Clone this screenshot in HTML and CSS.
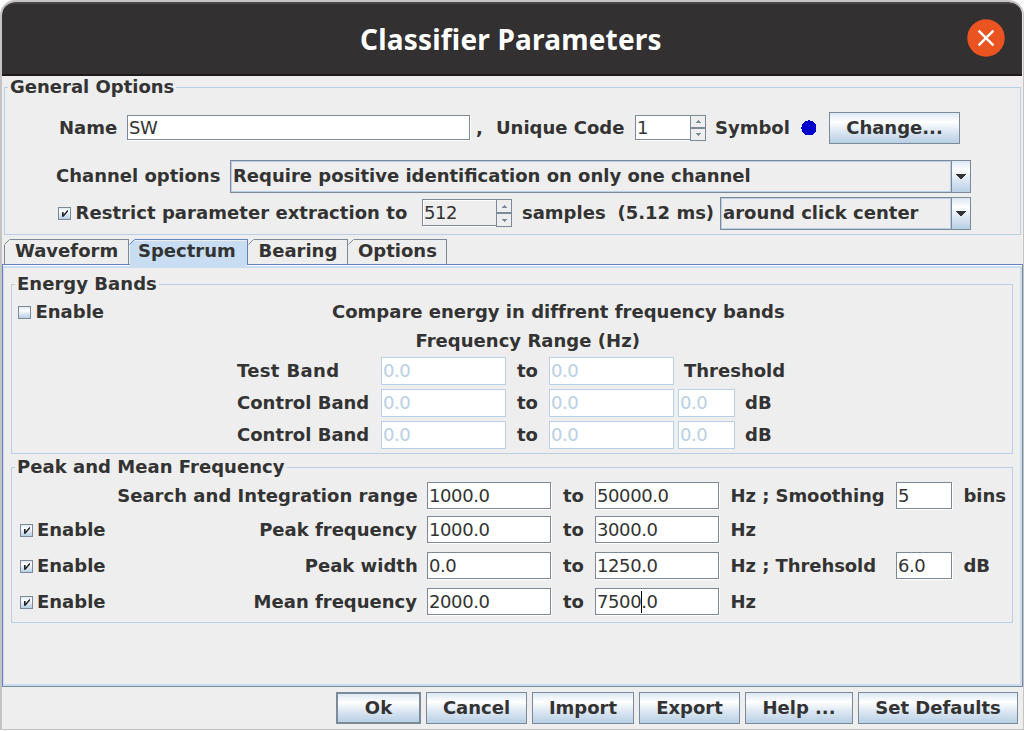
FILE: index.html
```html
<!DOCTYPE html>
<html lang="en">
<head>
<meta charset="utf-8">
<title>Classifier Parameters</title>
<link rel="stylesheet" href="styles.css">
</head>
<body>
<svg width="0" height="0" class="defs">
  <symbol id="check" viewBox="0 0 11 11"><path d="M3 4h1.6v2.4L8.2 2.2h.9v1.3L4.6 8.8H3z" fill="#222"/></symbol>
  <symbol id="arrow" viewBox="0 0 10 5" shape-rendering="crispEdges"><path d="M0 0h10v1H9v1H8v1H7v1H6v1H4V4H3V3H2V2H1V1H0z" fill="#333"/></symbol>
  <symbol id="up" viewBox="0 0 5 3" shape-rendering="crispEdges"><path d="M2 0h1v1h1v1h1v1H0V2h1V1h1z" fill="#7a8a99"/></symbol>
  <symbol id="down" viewBox="0 0 5 3" shape-rendering="crispEdges"><path d="M0 0h5v1H4v1H3v1H2V2H1V1H0z" fill="#7a8a99"/></symbol>
</svg>
<div class="window">
  <header class="titlebar">
    <h1 class="title"><span>Classifier Parameters</span></h1>
    <svg class="close" width="38" height="38" viewBox="0 0 38 38"><circle cx="19" cy="19" r="18.7" fill="#e95420"/><path d="M11.6 11.6l14.8 14.8M26.4 11.6L11.6 26.4" stroke="#fff" stroke-width="2.4"/></svg>
  </header>
  <section class="group general">
    <div class="legend l-general">General Options</div>
    <div class="row name-row">
      <span>Name</span>
      <div class="field name">SW</div>
      <span>,</span>
      <span>Unique Code</span>
      <div class="spinner code"><div class="field">1</div><div class="steps"><i><svg width="5" height="3"><use href="#up"/></svg></i><i><svg width="5" height="3"><use href="#down"/></svg></i></div></div>
      <span>Symbol</span>
      <svg class="dot" width="16" height="16" shape-rendering="crispEdges"><circle cx="8" cy="8" r="7.6" fill="#0000cd"/></svg>
      <button class="button change">Change...</button>
    </div>
    <div class="row channel-row">
      <span>Channel options</span>
      <div class="combo"><span>Require positive identification on only one channel</span><i><svg width="10" height="5"><use href="#arrow"/></svg></i></div>
    </div>
    <div class="row restrict-row">
      <div class="box"><svg width="11" height="11"><use href="#check"/></svg></div>
      <span class="restrict">Restrict parameter extraction to</span>
      <div class="spinner samples"><div class="field">512</div><div class="steps"><i><svg width="5" height="3"><use href="#up"/></svg></i><i><svg width="5" height="3"><use href="#down"/></svg></i></div></div>
      <span>samples</span>
      <span>(5.12 ms)</span>
      <div class="combo"><span>around click center</span><i><svg width="10" height="5"><use href="#arrow"/></svg></i></div>
    </div>
  </section>
  <nav class="tabs">
    <div class="tab waveform"><svg width="6" height="6"><path d="M.5 5.5L5.5.5" stroke="#7a8a99"/></svg>Waveform</div>
    <div class="tab spectrum"><svg width="6" height="6"><path d="M.5 5.5L5.5.5" stroke="#6382bf"/></svg>Spectrum</div>
    <div class="tab bearing"><svg width="6" height="6"><path d="M.5 5.5L5.5.5" stroke="#7a8a99"/></svg>Bearing</div>
    <div class="tab options"><svg width="6" height="6"><path d="M.5 5.5L5.5.5" stroke="#7a8a99"/></svg>Options</div>
  </nav>
  <main class="panel">
    <section class="group energy">
      <div class="legend l-energy">Energy Bands</div>
      <div class="row compare-row">
        <div class="box"></div>
        <span>Enable</span>
        <span class="compare">Compare energy in diffrent frequency bands</span>
      </div>
      <div class="range-title">Frequency Range (Hz)</div>
      <div class="row band-row"><span class="test">Test Band</span><div class="field off">0.0</div><span>to</span><div class="field off">0.0</div><span class="threshold">Threshold</span></div>
      <div class="row band-row"><span>Control Band</span><div class="field off">0.0</div><span>to</span><div class="field off">0.0</div><div class="field off small">0.0</div><span>dB</span></div>
      <div class="row band-row"><span>Control Band</span><div class="field off">0.0</div><span>to</span><div class="field off">0.0</div><div class="field off small">0.0</div><span>dB</span></div>
    </section>
    <section class="group peak">
      <div class="legend l-peak">Peak and Mean Frequency</div>
      <div class="row peak-row first"><div></div><span></span><span class="right">Search and Integration range</span><div class="field">1000.0</div><span>to</span><div class="field">50000.0</div><span class="unit">Hz ; Smoothing</span><div class="field">5</div><span class="unit">bins</span></div>
      <div class="row peak-row"><div class="box"><svg width="11" height="11"><use href="#check"/></svg></div><span>Enable</span><span class="right">Peak frequency</span><div class="field">1000.0</div><span>to</span><div class="field">3000.0</div><span class="unit">Hz</span></div>
      <div class="row peak-row"><div class="box"><svg width="11" height="11"><use href="#check"/></svg></div><span>Enable</span><span class="right width">Peak width</span><div class="field">0.0</div><span>to</span><div class="field">1250.0</div><span class="unit">Hz ; Threhsold</span><div class="field">6.0</div><span class="unit">dB</span></div>
      <div class="row peak-row"><div class="box"><svg width="11" height="11"><use href="#check"/></svg></div><span>Enable</span><span class="right">Mean frequency</span><div class="field">2000.0</div><span>to</span><div class="field">7500<b class="caret"></b>.0</div><span class="unit">Hz</span></div>
    </section>
  </main>
  <footer class="actions">
    <button class="button ok">Ok</button>
    <button class="button cancel">Cancel</button>
    <button class="button import">Import</button>
    <button class="button export">Export</button>
    <button class="button help">Help ...</button>
    <button class="button defaults">Set Defaults</button>
  </footer>
</div>
</body>
</html>
```
FILE: styles.css
```css
* { box-sizing: border-box; }
body { margin: 0; background: #fff; color: #333; font: bold 18px/22px "DejaVu Sans", sans-serif; white-space: nowrap; overflow: hidden; }
svg { display: block; }
.defs { position: absolute; }
i { font-style: normal; }
.window { width: 1024px; height: 730px; border: solid #c5c3c3; border-width: 2px 1px 1px 2px; border-radius: 15px 15px 0 0; background: #eee; overflow: hidden; }
.titlebar { width: 1020px; height: 74px; background: #333031; border-top: 2px solid #484546; border-bottom: 2px solid #1e1a1c; display: flex; align-items: flex-start; border-radius: 13px 13px 0 0; }
.title { margin: 18px 0 0 358px; width: 607px; font: bold 28px/34px "Noto Sans", sans-serif; color: #fff; }
.title span { display: inline-block; letter-spacing: .2px; }
.close { margin-top: 15px; }
.group { border: 1px solid #b8cfe5; }
.legend { width: fit-content; height: 22px; margin: -12px 0 0 3px; padding: 0 2px; background: #eee; }
.row { display: grid; justify-content: start; align-items: start; }
.right { text-align: right; }
.general { margin: 11px 0 0 2px; width: 1017px; height: 148px; }
.name-row { margin-top: 14px; height: 32px; line-height: 32px; grid-template-columns: 54px 68px 349px 20px 139px 80px 86px 28px 131px; }
.name-row > :first-child { grid-column: 2; }
.name-row .name { width: 343px; height: 25px; margin-top: 3px; }
.dot { margin-top: 8px; }
.channel-row { margin-top: 16px; height: 33px; line-height: 32px; grid-template-columns: 174px 741px; padding-left: 51px; }
.restrict-row { margin-top: 4px; height: 33px; line-height: 32px; grid-template-columns: 17px 347px 100px 95.5px 102.5px 251px; padding-left: 53px; }
.restrict-row .box { margin-top: 10px; }
.restrict { padding-left: .5px; letter-spacing: .05px; }
.field { height: 27px; padding-left: 1px; border: 1px solid #7a8a99; box-shadow: 1px 1px 0 #fff; background: #fff; font-weight: normal; letter-spacing: -.4px; line-height: 26px; }
.name.field, .code .field { line-height: 24px; }
.spinner { display: flex; }
.code { height: 26px; margin-top: 3px; }
.code .field { width: 56px; height: 25px; }
.samples { height: 28px; margin-top: 2px; }
.samples .field { width: 75px; background: #eee; box-shadow: 1px 1px 0 #fff, inset 1px 1px 0 #fff; }
.steps { width: 16px; margin-left: -1px; display: grid; grid-template-rows: 1fr 1fr; background: #eee; position: relative; }
.steps i { border: 1px solid #7a8a99; display: grid; place-items: center; }
.combo { height: 33px; border: 1px solid #7a8a99; display: flex; }
.combo span { flex: 1; border: 1px solid #b8cfe5; padding-left: 1px; line-height: 28px; }
.combo i { width: 19px; border-left: 1px solid #7a8a99; display: grid; place-items: center; background: linear-gradient(#dde8f3, #fff 30%, #dde8f3 60%, #b8cfe5); }
.box { width: 13px; height: 13px; border: 1px solid #7a8a99; background: linear-gradient(#dde8f3, #fff 30%, #dde8f3 60%, #b8cfe5); }
.tabs { display: flex; height: 25px; margin: 4px 0 0 2px; }
.tab { height: 25px; border: solid #7a8a99; border-width: 1px 1px 0 0; line-height: 22px; padding-left: 11px; position: relative; background: linear-gradient(#7a8a99, #7a8a99) 0 5px / 1px 100% no-repeat; }
.tab svg { position: absolute; left: 0; top: -1px; background: #eee; }
.waveform { width: 125px; }
.spectrum { width: 119px; height: 27px; padding-left: 9px; border-right: 0; border-color: #6382bf; background: linear-gradient(#6382bf, #6382bf) 118px 0 / 1px 25px no-repeat, linear-gradient(#c8ddf2, #c8ddf2) 1px 1px / 117px 100% no-repeat; z-index: 1; }
.spectrum svg { background: linear-gradient(135deg, #eee 50%, #c8ddf2 50%); }
.bearing { width: 100px; padding-left: 10.5px; background: none; }
.options { width: 99px; padding-left: 10px; background: none; }
.panel { width: 1021px; height: 423px; border: solid #7a8a99; border-width: 1px; border-left-color: #6382bf; border-top-color: #6382bf; box-shadow: inset 0 1px #fff, inset 0 3px #c8ddf2, inset 1px 0 #c8ddf2, inset -2px -2px #c8ddf2; padding: 19px 0 0 8px; }
.energy { width: 1002px; height: 170px; }
.compare-row { margin-top: 6px; height: 22px; grid-template-columns: 17.5px 296.5px 460px; padding-left: 6px; }
.compare-row .box { margin-top: 5px; }
.compare { letter-spacing: .01px; }
.range-title { margin: 7px 0 5px 403.5px; height: 22px; letter-spacing: .03px; }
.band-row { grid-template-columns: 144px 136px 32px 129px 67px 50px; padding-left: 225px; line-height: 28px; height: 28px; margin-bottom: 4px; }
.test { letter-spacing: .35px; }
.off { width: 125px; height: 28px; border-color: #b8cfe5; box-shadow: none; color: #b8cfe5; }
.off.small { width: 57px; }
.threshold { padding-left: 6px; }
.peak { width: 1002px; height: 156px; margin-top: 13px; }
.l-peak, .l-energy { letter-spacing: .04px; }
.peak-row { grid-template-columns: 17px 62px 319px 145px 23px 144.5px 165.5px 67.5px 50px; padding-left: 8px; height: 28px; line-height: 28px; margin-bottom: 8px; }
.peak-row.first { margin: 4px 0 6px; }
.peak-row .box { margin-top: 8px; }
.peak-row .right { padding-right: 1px; }
.peak-row .width { padding-right: .3px; }
.peak-row.first .right { padding-right: .3px; letter-spacing: .04px; }
.peak-row .field { margin-left: 9px; width: 124px; }
.peak-row .field:nth-child(8) { width: 56px; margin-left: 0; }
.unit { letter-spacing: -.06px; }
.caret { display: inline-block; width: 1px; height: 22px; margin: 0 -1px 0 0; background: #000; vertical-align: -5px; }
.actions { margin: 5px 0 0 334px; display: grid; grid-template-columns: 85px 101px 102px 101px 108px 160px; column-gap: 0; justify-content: space-between; width: 682px; }
.button { margin: 0; padding: 0 0 1px; height: 32px; border: 1px solid #7a8a99; color: #333; font: inherit; line-height: 22px; background: linear-gradient(#dde8f3, #fff 30%, #dde8f3 60%, #b8cfe5); text-align: center; }
.ok { border-width: 2px; }
```
